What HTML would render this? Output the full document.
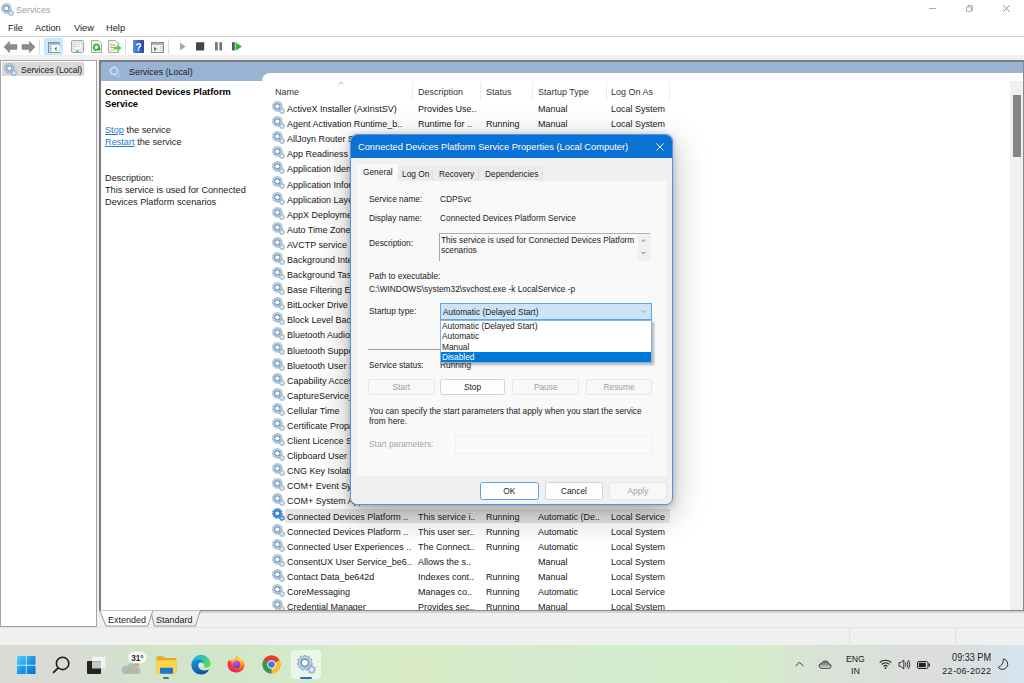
<!DOCTYPE html><html><head><meta charset="utf-8"><style>
*{margin:0;padding:0;box-sizing:border-box}
html,body{width:1024px;height:683px;overflow:hidden;background:#fff;position:relative;font-family:"Liberation Sans",sans-serif}
.t{position:absolute;line-height:1;white-space:nowrap;transform-origin:0 0}
.r{position:absolute}
</style></head><body>
<svg width="0" height="0" style="position:absolute">
<defs>
<g id="gear"><path d="M5.67 1.38L5.96 0.23L7.24 0.23L7.53 1.38L8.64 1.71L9.51 0.90L10.58 1.59L10.21 2.72L10.96 3.58L12.13 3.37L12.66 4.54L11.73 5.28L11.90 6.42L12.99 6.87L12.81 8.14L11.63 8.27L11.15 9.31L11.83 10.29L10.99 11.25L9.93 10.72L8.97 11.34L9.01 12.53L7.78 12.89L7.17 11.87L6.03 11.87L5.42 12.89L4.19 12.53L4.23 11.34L3.27 10.72L2.21 11.25L1.37 10.29L2.05 9.31L1.57 8.27L0.39 8.14L0.21 6.87L1.30 6.42L1.47 5.28L0.54 4.54L1.07 3.37L2.24 3.58L2.99 2.72L2.62 1.59L3.69 0.90L4.56 1.71Z" fill="#b5d6f0" stroke="#7291b0" stroke-width="0.55"/><circle cx="6.6" cy="6.6" r="3.1" fill="none" stroke="#7d96b0" stroke-width="1.5"/><circle cx="6.6" cy="6.6" r="2.3" fill="#fff"/><path d="M11.77 9.88L11.93 9.03L12.87 9.03L13.03 9.88L13.74 10.17L14.45 9.69L15.11 10.35L14.63 11.06L14.92 11.77L15.77 11.93L15.77 12.87L14.92 13.03L14.63 13.74L15.11 14.45L14.45 15.11L13.74 14.63L13.03 14.92L12.87 15.77L11.93 15.77L11.77 14.92L11.06 14.63L10.35 15.11L9.69 14.45L10.17 13.74L9.88 13.03L9.03 12.87L9.03 11.93L9.88 11.77L10.17 11.06L9.69 10.35L10.35 9.69L11.06 10.17Z" fill="#b9d2ea" stroke="#7291b0" stroke-width="0.5"/><circle cx="12.4" cy="12.4" r="1.1" fill="#fff"/></g><g id="gearsel"><path d="M5.67 1.38L5.96 0.23L7.24 0.23L7.53 1.38L8.64 1.71L9.51 0.90L10.58 1.59L10.21 2.72L10.96 3.58L12.13 3.37L12.66 4.54L11.73 5.28L11.90 6.42L12.99 6.87L12.81 8.14L11.63 8.27L11.15 9.31L11.83 10.29L10.99 11.25L9.93 10.72L8.97 11.34L9.01 12.53L7.78 12.89L7.17 11.87L6.03 11.87L5.42 12.89L4.19 12.53L4.23 11.34L3.27 10.72L2.21 11.25L1.37 10.29L2.05 9.31L1.57 8.27L0.39 8.14L0.21 6.87L1.30 6.42L1.47 5.28L0.54 4.54L1.07 3.37L2.24 3.58L2.99 2.72L2.62 1.59L3.69 0.90L4.56 1.71Z" fill="#4596df" stroke="#2c73bb" stroke-width="0.55"/><circle cx="6.6" cy="6.6" r="3.1" fill="none" stroke="#2f78c0" stroke-width="1.5"/><circle cx="6.6" cy="6.6" r="2.3" fill="#fff"/><path d="M11.77 9.88L11.93 9.03L12.87 9.03L13.03 9.88L13.74 10.17L14.45 9.69L15.11 10.35L14.63 11.06L14.92 11.77L15.77 11.93L15.77 12.87L14.92 13.03L14.63 13.74L15.11 14.45L14.45 15.11L13.74 14.63L13.03 14.92L12.87 15.77L11.93 15.77L11.77 14.92L11.06 14.63L10.35 15.11L9.69 14.45L10.17 13.74L9.88 13.03L9.03 12.87L9.03 11.93L9.88 11.77L10.17 11.06L9.69 10.35L10.35 9.69L11.06 10.17Z" fill="#4a98de" stroke="#2c73bb" stroke-width="0.5"/><circle cx="12.4" cy="12.4" r="1.1" fill="#fff"/></g>
</defs></svg>

<svg class="r" width="13" height="13" viewBox="0 0 16 16" style="left:1px;top:3px"><use href="#gear"/></svg>
<div class="t " style="left:16px;top:5.32px;font-size:9.900px;color:#a0a0a0;font-weight:normal;transform:scaleX(0.9091);">Services</div>
<div class="r" style="left:929px;top:8.3px;width:7px;height:0.9px;background:#aaa"></div>
<svg class="r" style="left:965.8px;top:5.3px" width="7.2" height="7.2" viewBox="0 0 8 8"><rect x="0.5" y="2" width="5.5" height="5.5" rx="1" fill="none" stroke="#8a8a8a" stroke-width="0.9"/><path d="M2 0.6h4a1.5 1.5 0 0 1 1.5 1.5v4" fill="none" stroke="#8a8a8a" stroke-width="0.9"/></svg>
<svg class="r" style="left:1002.8px;top:5.3px" width="7" height="7" viewBox="0 0 7 7"><path d="M0.3 0.3L6.7 6.7M6.7 0.3L0.3 6.7" stroke="#7a7a7a" stroke-width="0.85"/></svg>
<div class="t " style="left:8px;top:23.22px;font-size:9.900px;color:#1a1a1a;font-weight:normal;transform:scaleX(0.9394);">File</div>
<div class="t " style="left:35px;top:23.22px;font-size:9.900px;color:#1a1a1a;font-weight:normal;transform:scaleX(0.9394);">Action</div>
<div class="t " style="left:74px;top:23.22px;font-size:9.900px;color:#1a1a1a;font-weight:normal;transform:scaleX(0.9394);">View</div>
<div class="t " style="left:106px;top:23.22px;font-size:9.900px;color:#1a1a1a;font-weight:normal;transform:scaleX(0.9394);">Help</div>
<div class="r" style="left:0px;top:36px;width:1024px;height:1px;background:#cfcfcf"></div>
<div class="r" style="left:0px;top:55px;width:1024px;height:590px;background:#f0f0f0"></div>
<svg class="r" style="left:3px;top:40px" width="34" height="14" viewBox="0 0 34 14"><path d="M1 7L6.6 1.3V4.6H13.4Q14 4.6 14 5.2V8.8Q14 9.4 13.4 9.4H6.6V12.7Z" fill="#8c8c8c" stroke="#767676" stroke-width="0.5"/><path d="M32 7L26.4 1.3V4.6H19.6Q19 4.6 19 5.2V8.8Q19 9.4 19.6 9.4H26.4V12.7Z" fill="#8c8c8c" stroke="#767676" stroke-width="0.5"/></svg>
<div class="r" style="left:39px;top:39px;width:1px;height:15px;background:#dcdcdc"></div>
<div class="r" style="left:44.4px;top:37.6px;width:18.8px;height:17.4px;background:#cce8ff;border:1px solid #c2e2fd;border-radius:2px"></div>
<svg class="r" style="left:47.8px;top:42px" width="12.5" height="11" viewBox="0 0 12.5 11"><rect x="0.5" y="0.5" width="11.5" height="10" fill="#f6f6f6" stroke="#8593a3"/><rect x="1" y="1" width="10.5" height="1.8" fill="#a3afbd"/><rect x="1" y="2.8" width="3" height="7.2" fill="#dde6ef"/><rect x="1.6" y="4" width="1.6" height="1" fill="#7fa0c8"/><rect x="1.6" y="6" width="1.6" height="1" fill="#7fa0c8"/><rect x="1.6" y="8" width="1.6" height="1" fill="#7fa0c8"/><rect x="4.5" y="3.5" width="7" height="6.5" fill="#fff"/><path d="M6.3 6.8L8.6 4.6V9Z" fill="#2aa52a"/></svg>
<svg class="r" style="left:71px;top:40px" width="13" height="13" viewBox="0 0 13 13"><rect x="0.5" y="0.5" width="12" height="12" rx="1.2" fill="#ececec" stroke="#a5a5a5"/><rect x="2.2" y="2.2" width="8.6" height="7.6" fill="#f8f8f8" stroke="#c8c8c8" stroke-width="0.5"/><rect x="3.2" y="4" width="6" height="0.8" fill="#c9d3dc"/><rect x="3.2" y="6" width="6" height="0.8" fill="#c9d3dc"/><rect x="3.2" y="3.5" width="1.5" height="3.5" fill="#bfe6f8"/><rect x="5" y="10.6" width="3" height="1.6" fill="#41b0ef"/></svg>
<svg class="r" style="left:91px;top:40px" width="11" height="13" viewBox="0 0 11 13"><path d="M0.5 0.5H7.5L10.5 3.5V12.5H0.5Z" fill="#f7f7f7" stroke="#a8a8a8"/><circle cx="5.4" cy="7.2" r="2.7" fill="none" stroke="#3cc03c" stroke-width="1.9"/><path d="M6 8.2L9.3 8.2L9.3 11.3Z" fill="#25a025"/></svg>
<svg class="r" style="left:108px;top:40px" width="14" height="13" viewBox="0 0 14 13"><path d="M0.5 0.5H7.5L10.5 3.5V12.5H0.5Z" fill="#f8f3dc" stroke="#a8a8a8"/><rect x="2" y="4.5" width="5" height="0.8" fill="#9a9a9a"/><rect x="2" y="7" width="5" height="0.8" fill="#9a9a9a"/><rect x="2" y="9.5" width="5" height="0.8" fill="#c0c0c0"/><path d="M5.8 6.8H9.5V4.6L13.6 8L9.5 11.4V9.2H5.8Z" fill="#4fcf4f"/></svg>
<div class="r" style="left:125px;top:39px;width:1px;height:15px;background:#dcdcdc"></div>
<svg class="r" style="left:133px;top:40px" width="11" height="13" viewBox="0 0 11 13"><defs><linearGradient id="hg" x1="0" y1="0" x2="1" y2="0"><stop offset="0" stop-color="#5a8de6"/><stop offset="0.5" stop-color="#3764c8"/><stop offset="1" stop-color="#2448a8"/></linearGradient></defs><rect x="0" y="0" width="11" height="13" rx="0.8" fill="url(#hg)"/><text x="5.5" y="10.5" font-size="10" font-weight="bold" fill="#fff" text-anchor="middle" font-family="Liberation Sans">?</text></svg>
<svg class="r" style="left:151px;top:42px" width="13" height="11" viewBox="0 0 13 11"><rect x="0.5" y="0.5" width="12" height="10" fill="#f2f2f2" stroke="#8c8c8c"/><rect x="1" y="1" width="11" height="2" fill="#a9b4bf"/><rect x="9" y="4" width="3" height="6" fill="#d4e0ec"/><path d="M3 4.8L6 7L3 9.2Z" fill="#2aa52a"/></svg>
<div class="r" style="left:168px;top:39px;width:1px;height:15px;background:#dcdcdc"></div>
<svg class="r" style="left:179px;top:42px" width="64" height="9" viewBox="0 0 64 9"><path d="M1 0.6L6.6 4.5L1 8.4Z" fill="#a8a8a8"/><rect x="17" y="0.2" width="8.2" height="8.2" rx="1" fill="#444"/><rect x="36" y="0.2" width="2.8" height="8.2" fill="#777"/><rect x="40.3" y="0.2" width="2.8" height="8.2" fill="#777"/><rect x="53" y="0.2" width="2.8" height="8.2" fill="#555"/><path d="M56.5 0.3L63 4.5L56.5 8.7Z" fill="#2fb52f"/></svg>
<div class="r" style="left:0px;top:60px;width:97px;height:567px;background:#fff;border:1px solid #a3a3ab"></div>
<div class="r" style="left:2.2px;top:61.7px;width:82.2px;height:14.1px;background:#d9d9d9"></div>
<svg class="r" width="13" height="13" viewBox="0 0 16 16" style="left:4px;top:63px"><use href="#gear"/></svg>
<div class="t " style="left:20.5px;top:64.54px;font-size:9.405px;color:#1a1a1a;font-weight:normal;transform:scaleX(0.9091);">Services (Local)</div>
<div class="r" style="left:99px;top:60px;width:925px;height:551px;background:#fff;border:2px solid #7c7c7c;border-right:1px solid #8a8a8a;border-bottom:1px solid #8a8a8a"></div>
<div class="r" style="left:99px;top:611px;width:925px;height:1.8px;background:#d2d2d2"></div>
<div class="r" style="left:101px;top:62px;width:922px;height:19px;background:#98b3d3"></div>
<div class="r" style="left:262px;top:73px;width:761px;height:10px;background:#fff;border-top-left-radius:8px"></div>
<svg class="r" style="left:109px;top:66px" width="12" height="12" viewBox="0 0 12 12"><circle cx="5" cy="5" r="3.6" fill="none" stroke="#cfe3f5" stroke-width="1.6"/><circle cx="9" cy="9" r="2" fill="none" stroke="#b8d0e6" stroke-width="1"/></svg>
<div class="t " style="left:129px;top:67.31px;font-size:9.790px;color:#1a1a1a;font-weight:normal;transform:scaleX(0.9091);">Services (Local)</div>
<div class="t " style="left:105px;top:87.22px;font-size:9.900px;color:#000;font-weight:bold;transform:scaleX(0.9394);">Connected Devices Platform</div>
<div class="t " style="left:105px;top:98.82px;font-size:9.900px;color:#000;font-weight:bold;transform:scaleX(0.9394);">Service</div>
<div class="t " style="left:105px;top:125.22px;font-size:9.900px;color:#1a1a1a;font-weight:normal;transform:scaleX(0.9293);"><span style="color:#2a77d0;text-decoration:underline">Stop</span> the service</div>
<div class="t " style="left:105px;top:136.82px;font-size:9.900px;color:#1a1a1a;font-weight:normal;transform:scaleX(0.9293);"><span style="color:#2a77d0;text-decoration:underline">Restart</span> the service</div>
<div class="t " style="left:105px;top:172.62px;font-size:9.900px;color:#1a1a1a;font-weight:normal;transform:scaleX(0.9293);">Description:</div>
<div class="t " style="left:105px;top:185.32px;font-size:9.900px;color:#1a1a1a;font-weight:normal;transform:scaleX(0.9293);">This service is used for Connected</div>
<div class="t " style="left:105px;top:196.92px;font-size:9.900px;color:#1a1a1a;font-weight:normal;transform:scaleX(0.9293);">Devices Platform scenarios</div>
<div class="t " style="left:274.5px;top:87.22px;font-size:9.900px;color:#333;font-weight:normal;transform:scaleX(0.9091);">Name</div>
<svg class="r" style="left:338px;top:81px" width="6" height="4" viewBox="0 0 6 4"><path d="M0.5 3.5L3 1L5.5 3.5" fill="none" stroke="#aaa" stroke-width="0.8"/></svg>
<div class="r" style="left:412px;top:82px;width:1px;height:19px;background:#ececec"></div>
<div class="r" style="left:480px;top:82px;width:1px;height:19px;background:#ececec"></div>
<div class="r" style="left:532px;top:82px;width:1px;height:19px;background:#ececec"></div>
<div class="r" style="left:606px;top:82px;width:1px;height:19px;background:#ececec"></div>
<div class="r" style="left:669px;top:82px;width:1px;height:19px;background:#ececec"></div>
<div class="t " style="left:417.8px;top:87.22px;font-size:9.900px;color:#333;font-weight:normal;transform:scaleX(0.9091);">Description</div>
<div class="t " style="left:485.6px;top:87.22px;font-size:9.900px;color:#333;font-weight:normal;transform:scaleX(0.9091);">Status</div>
<div class="t " style="left:537.5px;top:87.22px;font-size:9.900px;color:#333;font-weight:normal;transform:scaleX(0.9091);">Startup Type</div>
<div class="t " style="left:611.4px;top:87.22px;font-size:9.900px;color:#333;font-weight:normal;transform:scaleX(0.9091);">Log On As</div>
<div class="r" style="left:101px;top:83px;width:912px;height:527px;overflow:hidden">
<svg class="r" width="13" height="13" viewBox="0 0 16 16" style="left:171px;top:18.00px"><use href="#gear"/></svg>
<div class="t " style="left:186.3px;top:21.12px;font-size:9.900px;color:#141414;font-weight:normal;transform:scaleX(0.9091);">ActiveX Installer (AxInstSV)</div>
<div class="t " style="left:316.8px;top:21.12px;font-size:9.900px;color:#141414;font-weight:normal;transform:scaleX(0.9091);">Provides Use..</div>
<div class="t " style="left:436.5px;top:21.12px;font-size:9.900px;color:#141414;font-weight:normal;transform:scaleX(0.9091);">Manual</div>
<div class="t " style="left:510.4px;top:21.12px;font-size:9.900px;color:#141414;font-weight:normal;transform:scaleX(0.9091);">Local System</div>
<svg class="r" width="13" height="13" viewBox="0 0 16 16" style="left:171px;top:33.09px"><use href="#gear"/></svg>
<div class="t " style="left:186.3px;top:36.21px;font-size:9.900px;color:#141414;font-weight:normal;transform:scaleX(0.9091);">Agent Activation Runtime_b..</div>
<div class="t " style="left:316.8px;top:36.21px;font-size:9.900px;color:#141414;font-weight:normal;transform:scaleX(0.9091);">Runtime for ..</div>
<div class="t " style="left:384.6px;top:36.21px;font-size:9.900px;color:#141414;font-weight:normal;transform:scaleX(0.9091);">Running</div>
<div class="t " style="left:436.5px;top:36.21px;font-size:9.900px;color:#141414;font-weight:normal;transform:scaleX(0.9091);">Manual</div>
<div class="t " style="left:510.4px;top:36.21px;font-size:9.900px;color:#141414;font-weight:normal;transform:scaleX(0.9091);">Local System</div>
<svg class="r" width="13" height="13" viewBox="0 0 16 16" style="left:171px;top:48.18px"><use href="#gear"/></svg>
<div class="t " style="left:186.3px;top:51.30px;font-size:9.900px;color:#141414;font-weight:normal;transform:scaleX(0.9091);">AllJoyn Router Service</div>
<svg class="r" width="13" height="13" viewBox="0 0 16 16" style="left:171px;top:63.27px"><use href="#gear"/></svg>
<div class="t " style="left:186.3px;top:66.39px;font-size:9.900px;color:#141414;font-weight:normal;transform:scaleX(0.9091);">App Readiness</div>
<svg class="r" width="13" height="13" viewBox="0 0 16 16" style="left:171px;top:78.36px"><use href="#gear"/></svg>
<div class="t " style="left:186.3px;top:81.48px;font-size:9.900px;color:#141414;font-weight:normal;transform:scaleX(0.9091);">Application Identity</div>
<svg class="r" width="13" height="13" viewBox="0 0 16 16" style="left:171px;top:93.45px"><use href="#gear"/></svg>
<div class="t " style="left:186.3px;top:96.57px;font-size:9.900px;color:#141414;font-weight:normal;transform:scaleX(0.9091);">Application Information</div>
<svg class="r" width="13" height="13" viewBox="0 0 16 16" style="left:171px;top:108.54px"><use href="#gear"/></svg>
<div class="t " style="left:186.3px;top:111.66px;font-size:9.900px;color:#141414;font-weight:normal;transform:scaleX(0.9091);">Application Layer Gateway Service</div>
<svg class="r" width="13" height="13" viewBox="0 0 16 16" style="left:171px;top:123.63px"><use href="#gear"/></svg>
<div class="t " style="left:186.3px;top:126.75px;font-size:9.900px;color:#141414;font-weight:normal;transform:scaleX(0.9091);">AppX Deployment Service</div>
<svg class="r" width="13" height="13" viewBox="0 0 16 16" style="left:171px;top:138.72px"><use href="#gear"/></svg>
<div class="t " style="left:186.3px;top:141.84px;font-size:9.900px;color:#141414;font-weight:normal;transform:scaleX(0.9091);">Auto Time Zone Updater</div>
<svg class="r" width="13" height="13" viewBox="0 0 16 16" style="left:171px;top:153.81px"><use href="#gear"/></svg>
<div class="t " style="left:186.3px;top:156.93px;font-size:9.900px;color:#141414;font-weight:normal;transform:scaleX(0.9091);">AVCTP service</div>
<svg class="r" width="13" height="13" viewBox="0 0 16 16" style="left:171px;top:168.90px"><use href="#gear"/></svg>
<div class="t " style="left:186.3px;top:172.02px;font-size:9.900px;color:#141414;font-weight:normal;transform:scaleX(0.9091);">Background Intelligent Transfer</div>
<svg class="r" width="13" height="13" viewBox="0 0 16 16" style="left:171px;top:183.99px"><use href="#gear"/></svg>
<div class="t " style="left:186.3px;top:187.11px;font-size:9.900px;color:#141414;font-weight:normal;transform:scaleX(0.9091);">Background Tasks Infrastructure</div>
<svg class="r" width="13" height="13" viewBox="0 0 16 16" style="left:171px;top:199.08px"><use href="#gear"/></svg>
<div class="t " style="left:186.3px;top:202.20px;font-size:9.900px;color:#141414;font-weight:normal;transform:scaleX(0.9091);">Base Filtering Engine</div>
<svg class="r" width="13" height="13" viewBox="0 0 16 16" style="left:171px;top:214.17px"><use href="#gear"/></svg>
<div class="t " style="left:186.3px;top:217.29px;font-size:9.900px;color:#141414;font-weight:normal;transform:scaleX(0.9091);">BitLocker Drive Encryption</div>
<svg class="r" width="13" height="13" viewBox="0 0 16 16" style="left:171px;top:229.26px"><use href="#gear"/></svg>
<div class="t " style="left:186.3px;top:232.38px;font-size:9.900px;color:#141414;font-weight:normal;transform:scaleX(0.9091);">Block Level Backup Engine</div>
<svg class="r" width="13" height="13" viewBox="0 0 16 16" style="left:171px;top:244.35px"><use href="#gear"/></svg>
<div class="t " style="left:186.3px;top:247.47px;font-size:9.900px;color:#141414;font-weight:normal;transform:scaleX(0.9091);">Bluetooth Audio Gateway</div>
<svg class="r" width="13" height="13" viewBox="0 0 16 16" style="left:171px;top:259.44px"><use href="#gear"/></svg>
<div class="t " style="left:186.3px;top:262.56px;font-size:9.900px;color:#141414;font-weight:normal;transform:scaleX(0.9091);">Bluetooth Support Service</div>
<svg class="r" width="13" height="13" viewBox="0 0 16 16" style="left:171px;top:274.53px"><use href="#gear"/></svg>
<div class="t " style="left:186.3px;top:277.65px;font-size:9.900px;color:#141414;font-weight:normal;transform:scaleX(0.9091);">Bluetooth User Support</div>
<svg class="r" width="13" height="13" viewBox="0 0 16 16" style="left:171px;top:289.62px"><use href="#gear"/></svg>
<div class="t " style="left:186.3px;top:292.74px;font-size:9.900px;color:#141414;font-weight:normal;transform:scaleX(0.9091);">Capability Access Manager</div>
<svg class="r" width="13" height="13" viewBox="0 0 16 16" style="left:171px;top:304.71px"><use href="#gear"/></svg>
<div class="t " style="left:186.3px;top:307.83px;font-size:9.900px;color:#141414;font-weight:normal;transform:scaleX(0.9091);">CaptureService_be642d</div>
<svg class="r" width="13" height="13" viewBox="0 0 16 16" style="left:171px;top:319.80px"><use href="#gear"/></svg>
<div class="t " style="left:186.3px;top:322.92px;font-size:9.900px;color:#141414;font-weight:normal;transform:scaleX(0.9091);">Cellular Time</div>
<svg class="r" width="13" height="13" viewBox="0 0 16 16" style="left:171px;top:334.89px"><use href="#gear"/></svg>
<div class="t " style="left:186.3px;top:338.01px;font-size:9.900px;color:#141414;font-weight:normal;transform:scaleX(0.9091);">Certificate Propagation</div>
<svg class="r" width="13" height="13" viewBox="0 0 16 16" style="left:171px;top:349.98px"><use href="#gear"/></svg>
<div class="t " style="left:186.3px;top:353.10px;font-size:9.900px;color:#141414;font-weight:normal;transform:scaleX(0.9091);">Client Licence Service</div>
<svg class="r" width="13" height="13" viewBox="0 0 16 16" style="left:171px;top:365.07px"><use href="#gear"/></svg>
<div class="t " style="left:186.3px;top:368.19px;font-size:9.900px;color:#141414;font-weight:normal;transform:scaleX(0.9091);">Clipboard User Service</div>
<svg class="r" width="13" height="13" viewBox="0 0 16 16" style="left:171px;top:380.16px"><use href="#gear"/></svg>
<div class="t " style="left:186.3px;top:383.28px;font-size:9.900px;color:#141414;font-weight:normal;transform:scaleX(0.9091);">CNG Key Isolation</div>
<svg class="r" width="13" height="13" viewBox="0 0 16 16" style="left:171px;top:395.25px"><use href="#gear"/></svg>
<div class="t " style="left:186.3px;top:398.37px;font-size:9.900px;color:#141414;font-weight:normal;transform:scaleX(0.9091);">COM+ Event System</div>
<svg class="r" width="13" height="13" viewBox="0 0 16 16" style="left:171px;top:410.34px"><use href="#gear"/></svg>
<div class="t " style="left:186.3px;top:413.46px;font-size:9.900px;color:#141414;font-weight:normal;transform:scaleX(0.9091);">COM+ System Application</div>
<div class="r" style="left:184px;top:425.7px;width:385px;height:14.6px;background:#e5e5e5"></div>
<svg class="r" width="13" height="13" viewBox="0 0 16 16" style="left:171px;top:425.43px"><use href="#gearsel"/></svg>
<div class="t " style="left:186.3px;top:428.55px;font-size:9.900px;color:#141414;font-weight:normal;transform:scaleX(0.9091);">Connected Devices Platform ..</div>
<div class="t " style="left:316.8px;top:428.55px;font-size:9.900px;color:#141414;font-weight:normal;transform:scaleX(0.9091);">This service i..</div>
<div class="t " style="left:384.6px;top:428.55px;font-size:9.900px;color:#141414;font-weight:normal;transform:scaleX(0.9091);">Running</div>
<div class="t " style="left:436.5px;top:428.55px;font-size:9.900px;color:#141414;font-weight:normal;transform:scaleX(0.9091);">Automatic (De..</div>
<div class="t " style="left:510.4px;top:428.55px;font-size:9.900px;color:#141414;font-weight:normal;transform:scaleX(0.9091);">Local Service</div>
<svg class="r" width="13" height="13" viewBox="0 0 16 16" style="left:171px;top:440.52px"><use href="#gear"/></svg>
<div class="t " style="left:186.3px;top:443.64px;font-size:9.900px;color:#141414;font-weight:normal;transform:scaleX(0.9091);">Connected Devices Platform ..</div>
<div class="t " style="left:316.8px;top:443.64px;font-size:9.900px;color:#141414;font-weight:normal;transform:scaleX(0.9091);">This user ser..</div>
<div class="t " style="left:384.6px;top:443.64px;font-size:9.900px;color:#141414;font-weight:normal;transform:scaleX(0.9091);">Running</div>
<div class="t " style="left:436.5px;top:443.64px;font-size:9.900px;color:#141414;font-weight:normal;transform:scaleX(0.9091);">Automatic</div>
<div class="t " style="left:510.4px;top:443.64px;font-size:9.900px;color:#141414;font-weight:normal;transform:scaleX(0.9091);">Local System</div>
<svg class="r" width="13" height="13" viewBox="0 0 16 16" style="left:171px;top:455.61px"><use href="#gear"/></svg>
<div class="t " style="left:186.3px;top:458.73px;font-size:9.900px;color:#141414;font-weight:normal;transform:scaleX(0.9091);">Connected User Experiences ..</div>
<div class="t " style="left:316.8px;top:458.73px;font-size:9.900px;color:#141414;font-weight:normal;transform:scaleX(0.9091);">The Connect..</div>
<div class="t " style="left:384.6px;top:458.73px;font-size:9.900px;color:#141414;font-weight:normal;transform:scaleX(0.9091);">Running</div>
<div class="t " style="left:436.5px;top:458.73px;font-size:9.900px;color:#141414;font-weight:normal;transform:scaleX(0.9091);">Automatic</div>
<div class="t " style="left:510.4px;top:458.73px;font-size:9.900px;color:#141414;font-weight:normal;transform:scaleX(0.9091);">Local System</div>
<svg class="r" width="13" height="13" viewBox="0 0 16 16" style="left:171px;top:470.70px"><use href="#gear"/></svg>
<div class="t " style="left:186.3px;top:473.82px;font-size:9.900px;color:#141414;font-weight:normal;transform:scaleX(0.9091);">ConsentUX User Service_be6..</div>
<div class="t " style="left:316.8px;top:473.82px;font-size:9.900px;color:#141414;font-weight:normal;transform:scaleX(0.9091);">Allows the s..</div>
<div class="t " style="left:436.5px;top:473.82px;font-size:9.900px;color:#141414;font-weight:normal;transform:scaleX(0.9091);">Manual</div>
<div class="t " style="left:510.4px;top:473.82px;font-size:9.900px;color:#141414;font-weight:normal;transform:scaleX(0.9091);">Local System</div>
<svg class="r" width="13" height="13" viewBox="0 0 16 16" style="left:171px;top:485.79px"><use href="#gear"/></svg>
<div class="t " style="left:186.3px;top:488.91px;font-size:9.900px;color:#141414;font-weight:normal;transform:scaleX(0.9091);">Contact Data_be642d</div>
<div class="t " style="left:316.8px;top:488.91px;font-size:9.900px;color:#141414;font-weight:normal;transform:scaleX(0.9091);">Indexes cont..</div>
<div class="t " style="left:384.6px;top:488.91px;font-size:9.900px;color:#141414;font-weight:normal;transform:scaleX(0.9091);">Running</div>
<div class="t " style="left:436.5px;top:488.91px;font-size:9.900px;color:#141414;font-weight:normal;transform:scaleX(0.9091);">Manual</div>
<div class="t " style="left:510.4px;top:488.91px;font-size:9.900px;color:#141414;font-weight:normal;transform:scaleX(0.9091);">Local System</div>
<svg class="r" width="13" height="13" viewBox="0 0 16 16" style="left:171px;top:500.88px"><use href="#gear"/></svg>
<div class="t " style="left:186.3px;top:504.00px;font-size:9.900px;color:#141414;font-weight:normal;transform:scaleX(0.9091);">CoreMessaging</div>
<div class="t " style="left:316.8px;top:504.00px;font-size:9.900px;color:#141414;font-weight:normal;transform:scaleX(0.9091);">Manages co..</div>
<div class="t " style="left:384.6px;top:504.00px;font-size:9.900px;color:#141414;font-weight:normal;transform:scaleX(0.9091);">Running</div>
<div class="t " style="left:436.5px;top:504.00px;font-size:9.900px;color:#141414;font-weight:normal;transform:scaleX(0.9091);">Automatic</div>
<div class="t " style="left:510.4px;top:504.00px;font-size:9.900px;color:#141414;font-weight:normal;transform:scaleX(0.9091);">Local Service</div>
<svg class="r" width="13" height="13" viewBox="0 0 16 16" style="left:171px;top:515.97px"><use href="#gear"/></svg>
<div class="t " style="left:186.3px;top:519.09px;font-size:9.900px;color:#141414;font-weight:normal;transform:scaleX(0.9091);">Credential Manager</div>
<div class="t " style="left:316.8px;top:519.09px;font-size:9.900px;color:#141414;font-weight:normal;transform:scaleX(0.9091);">Provides sec..</div>
<div class="t " style="left:384.6px;top:519.09px;font-size:9.900px;color:#141414;font-weight:normal;transform:scaleX(0.9091);">Running</div>
<div class="t " style="left:436.5px;top:519.09px;font-size:9.900px;color:#141414;font-weight:normal;transform:scaleX(0.9091);">Manual</div>
<div class="t " style="left:510.4px;top:519.09px;font-size:9.900px;color:#141414;font-weight:normal;transform:scaleX(0.9091);">Local System</div>
</div>
<div class="r" style="left:1010px;top:81px;width:12.5px;height:529px;background:#f0f0f0"></div>
<div class="r" style="left:1013px;top:95px;width:7.5px;height:61.5px;background:#858585"></div>
<svg class="r" style="left:99px;top:610px" width="104" height="17" viewBox="0 0 104 17"><path d="M51.5 0.5L55.5 16H96.4L101.4 0.5" fill="#f0f0f0" stroke="#8f8f8f" stroke-width="0.9"/><path d="M0.9 0.5L6.9 16H48.8L53.8 0.5" fill="#fff" stroke="#8f8f8f" stroke-width="0.9"/></svg>
<div class="t " style="left:107.8px;top:615.12px;font-size:9.900px;color:#1a1a1a;font-weight:normal;transform:scaleX(0.9091);">Extended</div>
<div class="t " style="left:156px;top:615.12px;font-size:9.900px;color:#1a1a1a;font-weight:normal;transform:scaleX(0.9091);">Standard</div>
<div class="r" style="left:0px;top:627px;width:1024px;height:1px;background:#e4e4e4"></div>
<div class="r" style="left:849px;top:628px;width:1px;height:17px;background:#e0e0e0"></div>
<div class="r" style="left:955px;top:628px;width:1px;height:17px;background:#e0e0e0"></div>
<div class="r" style="left:350px;top:133.6px;width:323.2px;height:371.9px;border-radius:7px;box-shadow:0 9px 34px rgba(0,0,0,0.28),0 3px 9px rgba(0,0,0,0.16),0 0 4px rgba(0,0,0,0.10);background:#f0f0f0;border:1.3px solid #4a98e4;overflow:hidden"><div style="position:absolute;left:0;top:0;right:0;height:23px;background:#0a72d5"></div></div>
<div class="t " style="left:357.9px;top:142.42px;font-size:9.900px;color:#fff;font-weight:normal;transform:scaleX(0.9394);">Connected Devices Platform Service Properties (Local Computer)</div>
<svg class="r" style="left:655.5px;top:142.5px" width="8" height="8" viewBox="0 0 8 8"><path d="M0.4 0.4L7.6 7.6M7.6 0.4L0.4 7.6" stroke="#fff" stroke-width="0.9"/></svg>
<div class="r" style="left:397.6px;top:166.3px;width:35.4px;height:14.5px;background:#ebebeb;border-right:1px solid #e0e0e0"></div>
<div class="r" style="left:433px;top:166.3px;width:46.2px;height:14.5px;background:#ebebeb;border-right:1px solid #e0e0e0"></div>
<div class="r" style="left:479.2px;top:166.3px;width:63.6px;height:14.5px;background:#ebebeb;border-right:1px solid #e0e0e0"></div>
<div class="r" style="left:356.8px;top:180.6px;width:309.6px;height:295px;background:#f9f9f9"></div>
<div class="r" style="left:357.2px;top:164.2px;width:40.4px;height:17px;background:#f9f9f9"></div>
<div class="t " style="left:362.7px;top:168.12px;font-size:9.185px;color:#1a1a1a;font-weight:normal;transform:scaleX(0.9091);">General</div>
<div class="t " style="left:401.7px;top:170.32px;font-size:9.185px;color:#1a1a1a;font-weight:normal;transform:scaleX(0.9091);">Log On</div>
<div class="t " style="left:439.2px;top:170.32px;font-size:9.185px;color:#1a1a1a;font-weight:normal;transform:scaleX(0.9091);">Recovery</div>
<div class="t " style="left:485.4px;top:170.32px;font-size:9.185px;color:#1a1a1a;font-weight:normal;transform:scaleX(0.9091);">Dependencies</div>
<div class="t " style="left:368.5px;top:195.02px;font-size:9.185px;color:#1a1a1a;font-weight:normal;transform:scaleX(0.9091);">Service name:</div>
<div class="t " style="left:439.8px;top:195.02px;font-size:9.185px;color:#1a1a1a;font-weight:normal;transform:scaleX(0.9091);">CDPSvc</div>
<div class="t " style="left:368.5px;top:214.12px;font-size:9.185px;color:#1a1a1a;font-weight:normal;transform:scaleX(0.9091);">Display name:</div>
<div class="t " style="left:439.8px;top:214.12px;font-size:9.185px;color:#1a1a1a;font-weight:normal;transform:scaleX(0.9091);">Connected Devices Platform Service</div>
<div class="t " style="left:368.5px;top:238.52px;font-size:9.185px;color:#1a1a1a;font-weight:normal;transform:scaleX(0.9091);">Description:</div>
<div class="r" style="left:439.4px;top:233.2px;width:211px;height:27.4px;background:#f9f9f9;border-top:1px solid #b0b0b0;border-left:1px solid #a8a8a8"></div>
<div class="r" style="left:637.5px;top:234.2px;width:13px;height:26.4px;background:#f0f0f0"></div>
<svg class="r" style="left:640px;top:236px" width="7" height="22" viewBox="0 0 7 22"><path d="M1 5.5L3.5 3L6 5.5Z" fill="#a8a8a8"/><path d="M1 16L3.5 18.5L6 16Z" fill="#a8a8a8"/></svg>
<div class="t " style="left:440.5px;top:235.82px;font-size:9.185px;color:#1a1a1a;font-weight:normal;transform:scaleX(0.9091);">This service is used for Connected Devices Platform</div>
<div class="t " style="left:440.5px;top:245.82px;font-size:9.185px;color:#1a1a1a;font-weight:normal;transform:scaleX(0.9091);">scenarios</div>
<div class="t " style="left:368.5px;top:272.02px;font-size:9.185px;color:#1a1a1a;font-weight:normal;transform:scaleX(0.9091);">Path to executable:</div>
<div class="t " style="left:368.5px;top:285.12px;font-size:9.185px;color:#1a1a1a;font-weight:normal;transform:scaleX(0.9091);">C:\WINDOWS\system32\svchost.exe -k LocalService -p</div>
<div class="t " style="left:368.5px;top:306.72px;font-size:9.185px;color:#1a1a1a;font-weight:normal;transform:scaleX(0.9091);">Startup type:</div>
<div class="r" style="left:367.7px;top:349.2px;width:284px;height:1px;background:#a0a0a0"></div>
<div class="t " style="left:368.5px;top:361.02px;font-size:9.185px;color:#1a1a1a;font-weight:normal;transform:scaleX(0.9091);">Service status:</div>
<div class="t " style="left:439.8px;top:361.02px;font-size:9.185px;color:#1a1a1a;font-weight:normal;transform:scaleX(0.9091);">Running</div>
<div class="r" style="left:368px;top:378.7px;width:66.6px;height:16.6px;background:#f8f8f8;border:1px solid #e6e6e6;border-radius:2.5px"></div>
<div class="t" style="left:368px;top:383.11px;width:73.26px;text-align:center;font-size:9.185px;transform:scaleX(0.9091);color:#a0a0a0">Start</div>
<div class="r" style="left:440.4px;top:378.7px;width:65.1px;height:16.6px;background:#fefefe;border:1px solid #d4d4d4;border-radius:2.5px"></div>
<div class="t" style="left:440.4px;top:383.11px;width:71.61px;text-align:center;font-size:9.185px;transform:scaleX(0.9091);color:#1a1a1a">Stop</div>
<div class="r" style="left:511.5px;top:378.7px;width:67.5px;height:16.6px;background:#f8f8f8;border:1px solid #e6e6e6;border-radius:2.5px"></div>
<div class="t" style="left:511.5px;top:383.11px;width:74.25px;text-align:center;font-size:9.185px;transform:scaleX(0.9091);color:#a0a0a0">Pause</div>
<div class="r" style="left:585.7px;top:378.7px;width:66px;height:16.6px;background:#f8f8f8;border:1px solid #e6e6e6;border-radius:2.5px"></div>
<div class="t" style="left:585.7px;top:383.11px;width:72.60px;text-align:center;font-size:9.185px;transform:scaleX(0.9091);color:#a0a0a0">Resume</div>
<div class="t " style="left:368.5px;top:406.82px;font-size:9.185px;color:#1a1a1a;font-weight:normal;transform:scaleX(0.9091);">You can specify the start parameters that apply when you start the service</div>
<div class="t " style="left:368.5px;top:416.82px;font-size:9.185px;color:#1a1a1a;font-weight:normal;transform:scaleX(0.9091);">from here.</div>
<div class="t " style="left:368.5px;top:439.82px;font-size:9.185px;color:#a6a6a6;font-weight:normal;transform:scaleX(0.9091);">Start parameters:</div>
<div class="r" style="left:454.6px;top:435.3px;width:197.4px;height:18.4px;background:#f9f9f9;border:1px solid #efefef"></div>
<div class="r" style="left:479.8px;top:481.8px;width:58.8px;height:17.9px;background:#fefefe;border:1px solid #5aa2e6;border-radius:2.5px"></div>
<div class="t" style="left:479.8px;top:486.86px;width:64.68px;text-align:center;font-size:9.185px;transform:scaleX(0.9091);color:#1a1a1a">OK</div>
<div class="r" style="left:544.7px;top:481.8px;width:57.9px;height:17.9px;background:#fefefe;border:1px solid #d4d4d4;border-radius:2.5px"></div>
<div class="t" style="left:544.7px;top:486.86px;width:63.69px;text-align:center;font-size:9.185px;transform:scaleX(0.9091);color:#1a1a1a">Cancel</div>
<div class="r" style="left:608.7px;top:481.8px;width:57.9px;height:17.9px;background:#f8f8f8;border:1px solid #e6e6e6;border-radius:2.5px"></div>
<div class="t" style="left:608.7px;top:486.86px;width:63.69px;text-align:center;font-size:9.185px;transform:scaleX(0.9091);color:#a0a0a0">Apply</div>
<div class="r" style="left:439.8px;top:303.2px;width:212.3px;height:16.4px;background:#cce4f7;border:1px solid #5ea6e6"></div>
<div class="t " style="left:442.9px;top:308.12px;font-size:9.185px;color:#1a1a1a;font-weight:normal;transform:scaleX(0.9091);">Automatic (Delayed Start)</div>
<svg class="r" style="left:641px;top:309.5px" width="5" height="3" viewBox="0 0 5 3"><path d="M0.3 0.3L2.5 2.5L4.7 0.3" fill="none" stroke="#888" stroke-width="0.7"/></svg>
<div class="r" style="left:439.8px;top:319.6px;width:212.3px;height:43.2px;background:#fff;border:1px solid #86b6e4;box-shadow:1.5px 1.5px 2.5px rgba(0,0,0,0.28)"></div>
<div class="r" style="left:440.6px;top:352px;width:210.7px;height:10.2px;background:#0078d7"></div>
<div class="t " style="left:442px;top:322.12px;font-size:9.185px;color:#1a1a1a;font-weight:normal;transform:scaleX(0.9091);">Automatic (Delayed Start)</div>
<div class="t " style="left:442px;top:331.82px;font-size:9.185px;color:#1a1a1a;font-weight:normal;transform:scaleX(0.9091);">Automatic</div>
<div class="t " style="left:442px;top:342.62px;font-size:9.185px;color:#1a1a1a;font-weight:normal;transform:scaleX(0.9091);">Manual</div>
<div class="t " style="left:442px;top:352.92px;font-size:9.185px;color:#fff;font-weight:normal;transform:scaleX(0.9091);">Disabled</div>
<div class="r" style="left:0;top:645px;width:1024px;height:38px;background:linear-gradient(90deg,#d9dbd7 0%,#d8ddd4 9%,#d2e4ca 15%,#d3eacb 30%,#d9ecc6 40%,#d3eacf 55%,#d4eecb 70%,#d6ebcb 75%,#dae2d7 80%,#dcdedc 90%,#dadfe0 95%,#d5e5ef 100%)"></div>
<svg class="r" style="left:17px;top:655.5px" width="18.5" height="18.5" viewBox="0 0 18.5 18.5"><defs><linearGradient id="wl" gradientUnits="userSpaceOnUse" x1="0" y1="0" x2="18.5" y2="18.5"><stop offset="0" stop-color="#52d1fb"/><stop offset="0.5" stop-color="#1a9ae8"/><stop offset="1" stop-color="#0b6cd4"/></linearGradient></defs><rect x="0" y="0" width="8.8" height="8.8" rx="0.8" fill="url(#wl)"/><rect x="9.7" y="0" width="8.8" height="8.8" rx="0.8" fill="url(#wl)"/><rect x="0" y="9.7" width="8.8" height="8.8" rx="0.8" fill="url(#wl)"/><rect x="9.7" y="9.7" width="8.8" height="8.8" rx="0.8" fill="url(#wl)"/></svg>
<svg class="r" style="left:52px;top:655.5px" width="18" height="18" viewBox="0 0 18 18"><circle cx="10.6" cy="7.4" r="6.2" fill="none" stroke="#1e1e1e" stroke-width="1.6"/><path d="M6.2 11.8L1.6 16.4" stroke="#1e1e1e" stroke-width="1.8" stroke-linecap="round"/></svg>
<svg class="r" style="left:86.5px;top:655.5px" width="19" height="18" viewBox="0 0 19 18"><rect x="5" y="0.5" width="13.5" height="12" rx="1" fill="#f2f2f2" stroke="#dcdcdc" stroke-width="0.5"/><rect x="0" y="5" width="14" height="13" rx="1" fill="#222"/><rect x="5" y="5.2" width="9" height="7.3" fill="#c7c7c7"/></svg>
<svg class="r" style="left:121px;top:650.5px" width="27" height="24" viewBox="0 0 27 24"><rect x="7.2" y="0.5" width="18.4" height="12" rx="6" fill="#f4f8f1"/><text x="16.4" y="9.7" font-size="8.2" font-family="Liberation Sans" text-anchor="middle" fill="#2a2a2a" style="font-weight:bold">31°</text><path d="M13.2 12.4H18.2V15.6A4.5 4.5 0 0 1 13.2 12.4Z" fill="#f5a623"/><path d="M3.5 23H16A3.2 3.2 0 0 0 16.3 16.6A5.2 5.2 0 0 0 6.6 14.8A4.2 4.2 0 0 0 3.5 23Z" fill="#a8bccb"/><ellipse cx="9.6" cy="19.6" rx="5.5" ry="3" fill="#c0b590" opacity="0.85"/></svg>
<svg class="r" style="left:156px;top:655.5px" width="21" height="18" viewBox="0 0 21 18"><path d="M0.5 1.5Q0.5 0.3 1.7 0.3H7L9 2H19.3Q20.5 2 20.5 3.2V16.5Q20.5 17.7 19.3 17.7H1.7Q0.5 17.7 0.5 16.5Z" fill="#e8a82a"/><path d="M0.5 4.2H20.5V16.5Q20.5 17.7 19.3 17.7H1.7Q0.5 17.7 0.5 16.5Z" fill="#fdd44f"/><rect x="4" y="11.8" width="13" height="5.9" rx="0.8" fill="#1a78d0"/></svg>
<div class="r" style="left:163px;top:677px;width:6px;height:1.6px;background:#6b6b6b;border-radius:1px"></div>
<svg class="r" style="left:191px;top:654.7px" width="20" height="20" viewBox="0 0 20 20"><defs><linearGradient id="eg1" x1="0" y1="0.2" x2="1" y2="0.6"><stop offset="0" stop-color="#2bb8f0"/><stop offset="0.55" stop-color="#2ec3a8"/><stop offset="1" stop-color="#62dd55"/></linearGradient><linearGradient id="eg2" x1="0" y1="0" x2="0.6" y2="1"><stop offset="0" stop-color="#1d93e2"/><stop offset="1" stop-color="#0d4f9c"/></linearGradient></defs><path d="M0.4 9.5A9.6 9.6 0 0 1 19.6 9.3C19.6 11.6 17.6 12.6 15.4 12.6C13.4 12.6 12.6 11.8 12.6 10.6Z" fill="url(#eg1)"/><ellipse cx="10.3" cy="9.6" rx="3" ry="2.4" fill="#d8eed8"/><path d="M0.4 9.8C0.4 6.4 3.4 4.4 7 4.4C10.4 4.4 12.8 6.6 12.8 9.2C11.8 7.6 10.2 7.2 9.2 7.4C7.6 7.8 6.8 9.4 7.2 11.2C7.8 14 10.6 15.4 13.6 15.4C15.4 15.4 17 14.8 18.2 14.2C16.8 17.6 13.6 19.6 10 19.6C4.8 19.6 0.4 15.4 0.4 9.8Z" fill="url(#eg2)"/></svg>
<svg class="r" style="left:227.3px;top:655.3px" width="18" height="18" viewBox="0 0 18 18"><defs><radialGradient id="ff1" cx="0.75" cy="0.15" r="1"><stop offset="0" stop-color="#ffe642"/><stop offset="0.35" stop-color="#ffa21e"/><stop offset="0.7" stop-color="#f53e3a"/><stop offset="1" stop-color="#e0177a"/></radialGradient><radialGradient id="ff2" cx="0.4" cy="0.2" r="0.9"><stop offset="0" stop-color="#c25ae8"/><stop offset="1" stop-color="#6536d8"/></radialGradient></defs><path d="M9 0.3C12.5 2.5 17.6 5 17.6 10C17.6 14.4 13.8 17.6 9 17.6C4.3 17.6 0.6 14 0.6 9.6C0.6 7.4 1.4 5.6 2.6 4.6L3.2 6.8L4.8 4.6L6.4 5.8C7.6 4 9.6 3.2 9 0.3Z" fill="url(#ff1)"/><circle cx="9.6" cy="9.4" r="3.6" fill="url(#ff2)"/><path d="M4.5 6.5C5.5 5.4 7.8 5 9 5.8C7.6 6 6.2 7 6 8.2Z" fill="#ffb42a"/></svg>
<svg class="r" style="left:262px;top:655px" width="19" height="19" viewBox="0 0 19 19"><circle cx="9.5" cy="9.5" r="9" fill="#e33b2e"/><path d="M9.5 9.5L1.7 5A9 9 0 0 0 9.5 18.5Z" fill="#2e9e48"/><path d="M9.5 9.5L17.3 5A9 9 0 0 1 9.5 18.5Z" fill="#fbc02d"/><path d="M9.5 9.5L1.7 5A9 9 0 0 1 17.3 5Z" fill="#e33b2e"/><circle cx="9.5" cy="9.5" r="4.3" fill="#fff"/><circle cx="9.5" cy="9.5" r="3.3" fill="#3b7ee8"/></svg>
<div class="r" style="left:291px;top:649.7px;width:30px;height:29px;background:rgba(255,255,255,0.55);border-radius:4px"></div>
<svg class="r" width="19" height="19" viewBox="0 0 16 16" style="left:296.8px;top:654.6px"><use href="#gear"/></svg>
<div class="r" style="left:300px;top:677px;width:12.3px;height:2.4px;background:#1a73d6;border-radius:1.2px"></div>
<svg class="r" style="left:795px;top:661px" width="9" height="6" viewBox="0 0 9 6"><path d="M0.6 5.2L4.5 1.2L8.4 5.2" fill="none" stroke="#333" stroke-width="1"/></svg>
<svg class="r" style="left:818px;top:659.8px" width="13.5" height="9" viewBox="0 0 13.5 9"><defs><linearGradient id="cl" x1="0" y1="0" x2="0" y2="1"><stop offset="0" stop-color="#6a6a6a"/><stop offset="0.55" stop-color="#9a9a9a"/><stop offset="1" stop-color="#e8e8e8"/></linearGradient></defs><path d="M3 8.4H10.8A2.2 2.2 0 0 0 11 4A3.9 3.9 0 0 0 3.6 3.3A2.6 2.6 0 0 0 3 8.4Z" fill="url(#cl)" stroke="#3a3a3a" stroke-width="0.9"/></svg>
<div class="t " style="left:846px;top:654.30px;font-size:9.570px;color:#1a1a1a;font-weight:normal;transform:scaleX(0.9091);">ENG</div>
<div class="t " style="left:850.8px;top:666.12px;font-size:9.900px;color:#1a1a1a;font-weight:normal;transform:scaleX(0.9091);">IN</div>
<svg class="r" style="left:878.5px;top:658.5px" width="13" height="10" viewBox="0 0 13 10"><path d="M0.7 3.5A8.5 8.5 0 0 1 12.3 3.5" fill="none" stroke="#222" stroke-width="1.1"/><path d="M2.6 5.4A5.8 5.8 0 0 1 10.4 5.4" fill="none" stroke="#222" stroke-width="1.1"/><path d="M4.5 7.3A3 3 0 0 1 8.5 7.3" fill="none" stroke="#222" stroke-width="1.1"/><circle cx="6.5" cy="9" r="0.9" fill="#222"/></svg>
<svg class="r" style="left:898px;top:657.5px" width="13" height="13" viewBox="0 0 13 13"><path d="M1 4.6H2.8L5.8 2V11L2.8 8.4H1Z" fill="none" stroke="#222" stroke-width="0.9"/><path d="M7.4 4.8Q8.3 6.5 7.4 8.2" fill="none" stroke="#222" stroke-width="0.9"/><path d="M9 3.4Q10.6 6.5 9 9.6" fill="none" stroke="#222" stroke-width="0.9"/><path d="M10.6 2Q12.9 6.5 10.6 11" fill="none" stroke="#222" stroke-width="0.9"/></svg>
<svg class="r" style="left:917px;top:660.5px" width="13" height="8" viewBox="0 0 13 8"><rect x="0.5" y="0.5" width="10.5" height="7" rx="1.5" fill="none" stroke="#222" stroke-width="1"/><rect x="1.8" y="1.8" width="7" height="4.4" fill="#222"/><rect x="11.5" y="2.6" width="1.4" height="2.8" fill="#222"/></svg>
<div class="t" style="left:930px;top:652.53px;width:67.10px;text-align:right;font-size:10.010px;transform:scaleX(0.9091);color:#1a1a1a">09:33 PM</div>
<div class="t" style="left:930px;top:666.02px;width:67.40px;text-align:right;font-size:9.900px;letter-spacing:0.33px;transform:scaleX(0.9091);color:#1a1a1a">22-06-2022</div>
<svg class="r" style="left:997px;top:657px" width="13" height="14" viewBox="0 0 13 14"><path d="M6.4 1.9A5.3 5.3 0 1 1 1.2 10.3A8.5 8.5 0 0 0 6.4 1.9Z" fill="none" stroke="#262626" stroke-width="0.95" stroke-linejoin="round"/></svg>
</body></html>
